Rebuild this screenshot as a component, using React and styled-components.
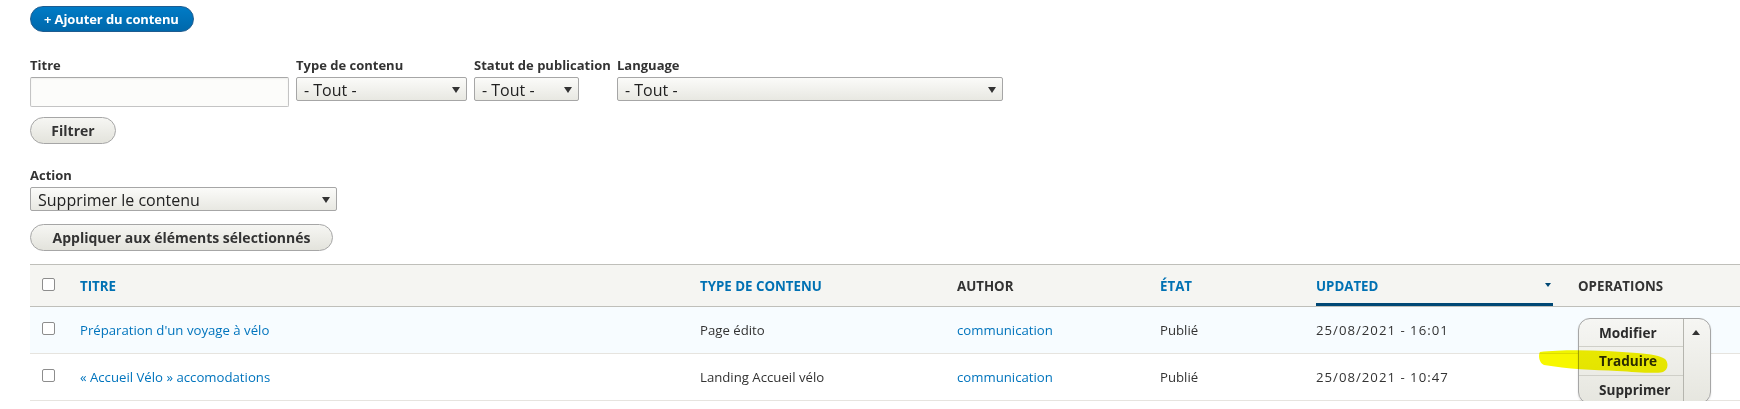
import React from "react";
import styled, { createGlobalStyle } from "styled-components";

const Global = createGlobalStyle`
  body {
    margin: 0;
    background: #fff;
    color: #333;
    font-family: "Open Sans", "Noto Sans", sans-serif;
    font-size: 13px;
    overflow: hidden;
  }
`;

const Page = styled.div`
  padding: 6px 0 0 30px;
  width: 1710px;
`;

const AddButton = styled.a`
  display: inline-flex;
  align-items: center;
  height: 26px;
  padding: 0 14px 0 13px;
  border-radius: 13px;
  background: linear-gradient(#007bc6, #0068ab);
  border: 1px solid #1e5c90;
  box-sizing: border-box;
  color: #fff;
  font-weight: 700;
  font-size: 13px;
  text-decoration: none;
  letter-spacing: -0.1px;
`;

const Filters = styled.div`
  display: flex;
  gap: 7px;
  margin-top: 25px;
  align-items: flex-start;
`;

const Field = styled.div`
  display: flex;
  flex-direction: column;
  width: ${(p) => p.$w}px;
`;

const Label = styled.label`
  font-weight: 700;
  font-size: 13px;
  line-height: 16px;
  margin-bottom: 4px;
  white-space: nowrap;
`;

const TextInput = styled.div`
  height: 30px;
  box-sizing: border-box;
  border: 1px solid #c4c4c4;
  border-top-color: #a8a8a8;
  border-radius: 2px;
  background: #fcfcfa;
  box-shadow: inset 0 1px 2px rgba(0, 0, 0, 0.06);
`;

const Select = styled.div`
  position: relative;
  height: 24px;
  width: ${(p) => p.$w}px;
  box-sizing: border-box;
  border: 1px solid #a6a6a6;
  border-radius: 2px;
  background: linear-gradient(#fbfbf9, #e8e8e2);
  display: flex;
  align-items: center;
  padding: 1px 0 0 7px;
  font-size: 16px;
  color: #222;
  white-space: pre;
  &::after {
    content: "";
    position: absolute;
    right: 6px;
    top: 9px;
    border-left: 4.5px solid transparent;
    border-right: 4.5px solid transparent;
    border-top: 6px solid #333;
  }
`;

const Button = styled.button`
  display: block;
  height: 27px;
  width: ${(p) => p.$w}px;
  margin-top: ${(p) => p.$mt}px;
  box-sizing: border-box;
  border: 1px solid #a6a6a6;
  border-radius: 14px;
  background: linear-gradient(#f6f6f3, #e3e3dc);
  font-family: inherit;
  font-weight: 700;
  font-size: 14px;
  color: #333;
  padding: 0;
`;

const ActionBlock = styled.div`
  display: flex;
  flex-direction: column;
  margin-top: 23px;
`;

const Table = styled.table`
  margin-top: 13px;
  width: 1710px;
  border-collapse: collapse;
  table-layout: fixed;
`;

const HeadRow = styled.tr`
  background: #f5f5f2;
  border-top: 1px solid #bfbfba;
  border-bottom: 1px solid #bfbfba;
  height: 41px;
`;

const Th = styled.th`
  text-align: left;
  padding: 0 0 0 12px;
  font-size: 13.3px;
  font-weight: 700;
  text-transform: uppercase;
  color: ${(p) => (p.$link ? "#0071b3" : "#333")};
  vertical-align: middle;
  position: relative;
`;

const ActiveSort = styled.div`
  position: relative;
  width: 237px;
  height: 41px;
  display: flex;
  align-items: center;
  box-sizing: border-box;
  border-bottom: 3px solid #004875;
  padding-top: 3px;
  &::after {
    content: "";
    position: absolute;
    right: 2px;
    top: 18px;
    border-left: 3px solid transparent;
    border-right: 3px solid transparent;
    border-top: 4px solid #004875;
  }
`;

const Row = styled.tr`
  height: 47px;
  border-bottom: 1px solid #e6e4df;
  background: ${(p) => (p.$hover ? "#f7fcff" : "#fff")};
`;

const Td = styled.td`
  padding: 0 0 0 12px;
  font-size: 13.2px;
  color: #333;
  vertical-align: middle;
  position: relative;
`;

const Link = styled.a`
  color: #0074bd;
  text-decoration: none;
`;

const Check = styled.span`
  display: block;
  width: 13px;
  height: 13px;
  box-sizing: border-box;
  border: 1px solid #8d8d8d;
  border-radius: 2px;
  background: #fff;
  margin-top: ${(p) => p.$mt || 0}px;
`;

const Date = styled.span`
  letter-spacing: 1px;
`;

const DropButton = styled.div`
  position: absolute;
  left: 12px;
  top: 11px;
  width: 133px;
  height: 86px;
  box-sizing: border-box;
  display: flex;
  border: 1px solid #a6a6a6;
  border-radius: 12px;
  background: linear-gradient(#f6f6f3, #e6e6df);
  box-shadow: 0 1px 2px rgba(0, 0, 0, 0.12);
  overflow: hidden;
  z-index: 2;
`;

const DropItems = styled.div`
  flex: 1;
  display: flex;
  flex-direction: column;
`;

const DropItem = styled.div`
  flex: 1;
  display: flex;
  align-items: center;
  padding-left: 20px;
  font-weight: 700;
  font-size: 13.6px;
  color: #2b2b2b;
  & + & {
    border-top: 1px solid #cfcfc8;
  }
`;

const Toggle = styled.div`
  width: 26px;
  border-left: 1px solid #b5b5ae;
  position: relative;
  &::after {
    content: "";
    position: absolute;
    left: 8px;
    top: 11px;
    border-left: 4px solid transparent;
    border-right: 4px solid transparent;
    border-bottom: 5px solid #333;
  }
`;

const Highlight = styled.svg`
  position: absolute;
  left: -27px;
  top: 42px;
  mix-blend-mode: multiply;
  z-index: 3;
  pointer-events: none;
`;

const rows = [
  {
    title: "Préparation d'un voyage à vélo",
    type: "Page édito",
    date: "25/08/2021 - 16:01",
    hover: true,
    ops: true,
  },
  {
    title: "« Accueil Vélo » accomodations",
    type: "Landing Accueil vélo",
    date: "25/08/2021 - 10:47",
  },
];

export default function App() {
  return (
    <>
      <Global />
      <Page>
        <AddButton>+ Ajouter du contenu</AddButton>

        <Filters>
          <Field $w={259}>
            <Label>Titre</Label>
            <TextInput />
          </Field>
          <Field $w={171}>
            <Label>Type de contenu</Label>
            <Select $w={171}>- Tout -</Select>
          </Field>
          <Field $w={136}>
            <Label>Statut de publication</Label>
            <Select $w={105}>- Tout -</Select>
          </Field>
          <Field $w={386}>
            <Label>Language</Label>
            <Select $w={386}>- Tout -</Select>
          </Field>
        </Filters>
        <Button $w={86} $mt={10}>
          Filtrer
        </Button>

        <ActionBlock>
          <Label>Action</Label>
          <Select $w={307}>Supprimer le contenu</Select>
          <Button $w={303} $mt={13}>
            Appliquer aux éléments sélectionnés
          </Button>
        </ActionBlock>

        <Table>
          <colgroup>
            <col style={{ width: 38 }} />
            <col style={{ width: 620 }} />
            <col style={{ width: 257 }} />
            <col style={{ width: 203 }} />
            <col style={{ width: 156 }} />
            <col style={{ width: 262 }} />
            <col />
          </colgroup>
          <thead>
            <HeadRow>
              <Th>
                <Check $mt={-2} />
              </Th>
              <Th $link>Titre</Th>
              <Th $link>Type de contenu</Th>
              <Th>Author</Th>
              <Th $link>État</Th>
              <Th $link>
                <ActiveSort>Updated</ActiveSort>
              </Th>
              <Th>Operations</Th>
            </HeadRow>
          </thead>
          <tbody>
            {rows.map((r, i) => (
              <Row key={i} $hover={r.hover}>
                <Td>
                  <Check $mt={-3} />
                </Td>
                <Td>
                  <Link>{r.title}</Link>
                </Td>
                <Td>{r.type}</Td>
                <Td>
                  <Link>communication</Link>
                </Td>
                <Td>Publié</Td>
                <Td>
                  <Date>{r.date}</Date>
                </Td>
                <Td>
                  {r.ops && (
                    <DropButton>
                      <DropItems>
                        <DropItem>Modifier</DropItem>
                        <DropItem>Traduire</DropItem>
                        <DropItem>Supprimer</DropItem>
                      </DropItems>
                      <Toggle />
                    </DropButton>
                  )}
                  {r.ops && (
                    <Highlight width="130" height="25" viewBox="0 0 130 25">
                      <path
                        d="M1 3 C 25 0, 65 1, 98 4 C 112 5, 122 7, 126 10 C 130 14, 129 21, 124 23 C 115 25, 98 23, 78 22 C 55 21, 28 20, 5 16 C 0 14, -1 6, 1 3 Z"
                        fill="#f7f700"
                      />
                    </Highlight>
                  )}
                </Td>
              </Row>
            ))}
          </tbody>
        </Table>
      </Page>
    </>
  );
}
